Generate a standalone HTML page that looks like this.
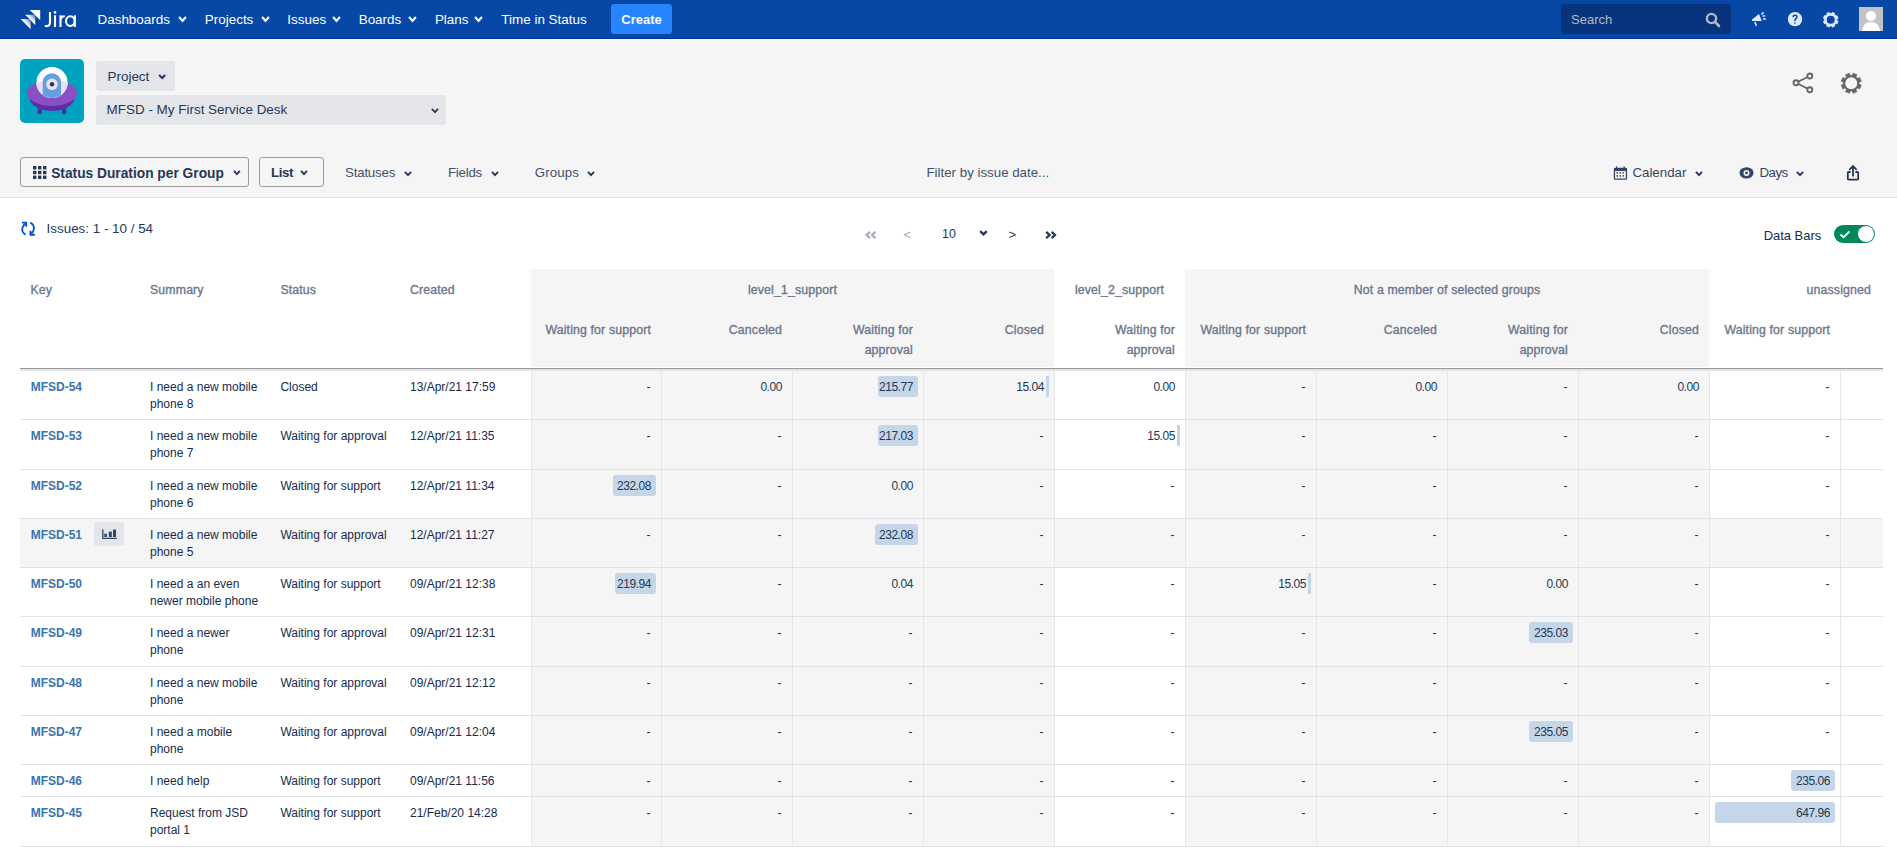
<!DOCTYPE html>
<html><head><meta charset="utf-8"><style>
html,body{margin:0;padding:0;width:1897px;height:859px;overflow:hidden;background:#fff;font-family:"Liberation Sans", sans-serif;}
.t{position:absolute;white-space:nowrap;}
svg{overflow:visible}
</style></head><body>
<div style="position:absolute;left:0px;top:0px;width:1897px;height:38px;background:#0747a6"></div>
<div style="position:absolute;left:0px;top:38px;width:1897px;height:1px;background:#03399c"></div>
<svg style="position:absolute;left:20px;top:9px" width="22" height="21" viewBox="0 0 22 21">
<defs><linearGradient id="jg" x1="1" y1="0" x2="0.3" y2="0.7"><stop offset="0" stop-color="#fff" stop-opacity="0.15"/><stop offset="0.6" stop-color="#fff" stop-opacity="1"/></linearGradient></defs>
<path d="M10 1 H20.2 V11 L19.5 10.6 Q14 5 10 1.2 Z" fill="#fff"/>
<path d="M5.5 5.8 H15.3 V15.8 L14.7 15.4 Q9.5 10 5.4 6.1 Z" fill="url(#jg)"/>
<path d="M1 10 H10.6 V20 L10 19.6 Q5 14.5 0.9 10.3 Z" fill="url(#jg)"/>
</svg>
<svg style="position:absolute;left:40px;top:8px" width="40" height="22" viewBox="0 0 40 22"><g transform="translate(-40 -8)" fill="none" stroke="#fff" stroke-width="2.1"><path d="M50 11.9 V22.3 Q50 26.1 46.9 26.1 Q45.6 26.1 44.9 25.6"/><path d="M55 15.3 V27"/><path d="M60.5 15.3 V27 M60.5 20.3 Q60.7 16.3 64.8 16.3"/><ellipse cx="70.3" cy="21.1" rx="4.3" ry="4.9"/><path d="M74.9 15.3 V27"/></g><circle cx="15" cy="4.4" r="1.35" fill="#fff"/></svg>
<div class="t" style="left:97.50px;top:11.93px;font-size:13.45px;line-height:16.81px;font-weight:400;color:#fff;">Dashboards</div>
<svg style="position:absolute;left:177.4px;top:14.5px" width="11" height="8" viewBox="0 0 11 8"><path d="M2.1 2.1 L5.5 5.9 L8.9 2.1" fill="none" stroke="#fff" stroke-width="2.2" stroke-linecap="butt" stroke-linejoin="miter"/></svg>
<div class="t" style="left:204.80px;top:11.93px;font-size:13.45px;line-height:16.81px;font-weight:400;color:#fff;">Projects</div>
<svg style="position:absolute;left:260px;top:14.5px" width="11" height="8" viewBox="0 0 11 8"><path d="M2.1 2.1 L5.5 5.9 L8.9 2.1" fill="none" stroke="#fff" stroke-width="2.2" stroke-linecap="butt" stroke-linejoin="miter"/></svg>
<div class="t" style="left:287.30px;top:11.93px;font-size:13.45px;line-height:16.81px;font-weight:400;color:#fff;">Issues</div>
<svg style="position:absolute;left:330.9px;top:14.5px" width="11" height="8" viewBox="0 0 11 8"><path d="M2.1 2.1 L5.5 5.9 L8.9 2.1" fill="none" stroke="#fff" stroke-width="2.2" stroke-linecap="butt" stroke-linejoin="miter"/></svg>
<div class="t" style="left:358.70px;top:11.93px;font-size:13.45px;line-height:16.81px;font-weight:400;color:#fff;">Boards</div>
<svg style="position:absolute;left:407.3px;top:14.5px" width="11" height="8" viewBox="0 0 11 8"><path d="M2.1 2.1 L5.5 5.9 L8.9 2.1" fill="none" stroke="#fff" stroke-width="2.2" stroke-linecap="butt" stroke-linejoin="miter"/></svg>
<div class="t" style="left:434.90px;top:11.93px;font-size:13.45px;line-height:16.81px;font-weight:400;color:#fff;">Plans</div>
<svg style="position:absolute;left:473.3px;top:14.5px" width="11" height="8" viewBox="0 0 11 8"><path d="M2.1 2.1 L5.5 5.9 L8.9 2.1" fill="none" stroke="#fff" stroke-width="2.2" stroke-linecap="butt" stroke-linejoin="miter"/></svg>
<div class="t" style="left:501.30px;top:11.93px;font-size:13.45px;line-height:16.81px;font-weight:400;color:#fff;">Time in Status</div>
<div style="position:absolute;left:611px;top:4px;width:61px;height:30px;background:#2684ff;border-radius:3px"></div>
<div class="t" style="left:621.30px;top:12.37px;font-size:13.0px;line-height:16.25px;font-weight:700;color:#fff;">Create</div>
<div style="position:absolute;left:1561px;top:4px;width:170px;height:30px;background:#07347c;border-radius:3px"></div>
<div class="t" style="left:1571.00px;top:12.37px;font-size:13.0px;line-height:16.25px;font-weight:400;color:#b3bac5;">Search</div>
<svg style="position:absolute;left:1705px;top:12px" width="16" height="16" viewBox="0 0 16 16"><circle cx="6.5" cy="6.5" r="4.6" fill="none" stroke="#b3bac5" stroke-width="2.4"/><path d="M10 10 L14 14" stroke="#b3bac5" stroke-width="2.6" stroke-linecap="round"/></svg>
<svg style="position:absolute;left:1750px;top:11px" width="18" height="16" viewBox="0 0 18 16"><path d="M2 9.9 V8.6 L9.1 3 L11.8 9.9 Z" fill="#deebff"/><path d="M4.8 11 L6.4 14.7" stroke="#deebff" stroke-width="1.6"/><path d="M11.4 3.5 L13.6 1.4 M12.6 5.3 L15 4.7 M13.2 7.7 L15.9 8.3" stroke="#deebff" stroke-width="1.5"/></svg>
<svg style="position:absolute;left:1787px;top:12px" width="16" height="15" viewBox="0 0 16 15"><circle cx="8" cy="7.1" r="7.2" fill="#deebff"/><path d="M6 5.1 Q6.1 3.3 8 3.3 Q9.9 3.3 9.9 5 Q9.9 6.2 8.6 6.9 Q7.9 7.3 7.9 8.4 V9.3" fill="none" stroke="#0747a6" stroke-width="1.4" stroke-linecap="butt"/><circle cx="7.9" cy="11.1" r="0.8" fill="#0747a6"/></svg>
<svg style="position:absolute;left:1823px;top:11.5px" width="15.5" height="15.5" viewBox="0 0 15.5 15.5"><path d="M13.90 8.51 L15.19 9.28 L14.09 11.93 L12.64 11.56 L11.56 12.64 L11.93 14.09 L9.28 15.19 L8.51 13.90 L6.99 13.90 L6.22 15.19 L3.57 14.09 L3.94 12.64 L2.86 11.56 L1.41 11.93 L0.31 9.28 L1.60 8.51 L1.60 6.99 L0.31 6.22 L1.41 3.57 L2.86 3.94 L3.94 2.86 L3.57 1.41 L6.22 0.31 L6.99 1.60 L8.51 1.60 L9.28 0.31 L11.93 1.41 L11.56 2.86 L12.64 3.94 L14.09 3.57 L15.19 6.22 L13.90 6.99 Z" fill="#deebff" stroke="#deebff" stroke-width="0.6" stroke-linejoin="round"/><circle cx="7.75" cy="7.75" r="6.2" fill="#deebff"/><circle cx="7.75" cy="7.75" r="4.03" fill="#0747a6"/></svg>
<div style="position:absolute;left:1859px;top:7px;width:24px;height:24px;background:#c4c4c4;overflow:hidden"></div>
<svg style="position:absolute;left:1859px;top:7px" width="24" height="24" viewBox="0 0 24 24"><circle cx="12" cy="9" r="5" fill="#fff"/><path d="M3 24 Q4 15 12 15 Q20 15 21 24 Z" fill="#fff"/></svg>
<div style="position:absolute;left:0px;top:39px;width:1897px;height:158px;background:#f5f5f5"></div>
<div style="position:absolute;left:0px;top:197px;width:1897px;height:1px;background:#dfe1e6"></div>
<svg style="position:absolute;left:20px;top:59px" width="64" height="64" viewBox="0 0 64 64">
<defs><clipPath id="dome"><circle cx="32" cy="23.5" r="15.6"/></clipPath></defs>
<rect x="0" y="0" width="64" height="64" rx="5" fill="#00a3bf"/>
<rect x="17.7" y="44" width="4.2" height="11" rx="0.8" fill="#5029a0"/>
<rect x="42" y="44" width="4.2" height="11" rx="0.8" fill="#5029a0"/>
<ellipse cx="32" cy="38.5" rx="22.5" ry="13.4" fill="#5a2ea6"/>
<ellipse cx="32" cy="34" rx="25.3" ry="12.9" fill="#8a4fc4"/>
<circle cx="32" cy="23.5" r="15.6" fill="#fff"/>
<g clip-path="url(#dome)"><ellipse cx="32" cy="34" rx="25.3" ry="12.9" fill="#e9e0f5"/>
<path d="M22.7 60 V23.3 A9.15 9.15 0 0 1 41 23.3 V60 Z" fill="#63a1de"/></g>
<circle cx="32" cy="25.3" r="5.8" fill="#e9e0f5"/>
<circle cx="32" cy="25.3" r="2.2" fill="#253858"/>
</svg>
<div style="position:absolute;left:96px;top:61px;width:79px;height:30px;background:#e4e5e8;border-radius:3px"></div>
<div class="t" style="left:107.50px;top:69.13px;font-size:13.45px;line-height:16.81px;font-weight:400;color:#253858;">Project</div>
<svg style="position:absolute;left:156.8px;top:72.5px" width="10.3" height="7" viewBox="0 0 10.3 7"><path d="M2.05 2.05 L5.15 4.95 L8.25 2.05" fill="none" stroke="#253858" stroke-width="2.1" stroke-linecap="butt" stroke-linejoin="miter"/></svg>
<div style="position:absolute;left:96px;top:95px;width:350px;height:30px;background:#e4e5e8;border-radius:3px"></div>
<div class="t" style="left:106.60px;top:101.93px;font-size:13.45px;line-height:16.81px;font-weight:400;color:#253858;">MFSD - My First Service Desk</div>
<svg style="position:absolute;left:430px;top:106.5px" width="10" height="7" viewBox="0 0 10 7"><path d="M1.9 1.9 L5.0 5.1 L8.1 1.9" fill="none" stroke="#253858" stroke-width="1.8" stroke-linecap="butt" stroke-linejoin="miter"/></svg>
<svg style="position:absolute;left:1792px;top:72px" width="22" height="22" viewBox="0 0 22 22"><path d="M17.8 4 L4 10.8 L17.8 17.8" fill="none" stroke="#666" stroke-width="1.7"/><circle cx="17.8" cy="4" r="2.5" fill="#f5f5f5" stroke="#666" stroke-width="1.9"/><circle cx="4" cy="10.8" r="2.5" fill="#f5f5f5" stroke="#666" stroke-width="1.9"/><circle cx="17.8" cy="17.8" r="2.5" fill="#f5f5f5" stroke="#666" stroke-width="1.9"/></svg>
<svg style="position:absolute;left:1840.5px;top:72.5px" width="20.5" height="20.5" viewBox="0 0 20.5 20.5"><path d="M17.97 11.28 L20.33 12.11 L18.69 16.06 L16.44 14.98 L14.98 16.44 L16.06 18.69 L12.11 20.33 L11.28 17.97 L9.22 17.97 L8.39 20.33 L4.44 18.69 L5.52 16.44 L4.06 14.98 L1.81 16.06 L0.17 12.11 L2.53 11.28 L2.53 9.22 L0.17 8.39 L1.81 4.44 L4.06 5.52 L5.52 4.06 L4.44 1.81 L8.39 0.17 L9.22 2.53 L11.28 2.53 L12.11 0.17 L16.06 1.81 L14.98 4.06 L16.44 5.52 L18.69 4.44 L20.33 8.39 L17.97 9.22 Z" fill="#666666" stroke="#666666" stroke-width="0.6" stroke-linejoin="round"/><circle cx="10.25" cy="10.25" r="7.79" fill="#666666"/><circle cx="10.25" cy="10.25" r="5.944999999999999" fill="#f5f5f5"/></svg>
<div style="position:absolute;left:20px;top:157px;width:227px;height:28px;border:1px solid #9a9a9a;border-radius:3px"></div>
<svg style="position:absolute;left:32.5px;top:166px" width="14" height="13" viewBox="0 0 14 13"><rect x="0" y="0.0" width="3.4" height="3.4" fill="#253858"/><rect x="0" y="4.8" width="3.4" height="3.4" fill="#253858"/><rect x="0" y="9.6" width="3.4" height="3.4" fill="#253858"/><rect x="5" y="0.0" width="3.4" height="3.4" fill="#253858"/><rect x="5" y="4.8" width="3.4" height="3.4" fill="#253858"/><rect x="5" y="9.6" width="3.4" height="3.4" fill="#253858"/><rect x="10" y="0.0" width="3.4" height="3.4" fill="#253858"/><rect x="10" y="4.8" width="3.4" height="3.4" fill="#253858"/><rect x="10" y="9.6" width="3.4" height="3.4" fill="#253858"/></svg>
<div class="t" style="left:51.20px;top:164.64px;font-size:13.75px;line-height:17.19px;font-weight:700;color:#253858;">Status Duration per Group</div>
<svg style="position:absolute;left:231.6px;top:169px" width="9.8" height="7" viewBox="0 0 9.8 7"><path d="M1.95 1.95 L4.9 5.05 L7.8500000000000005 1.95" fill="none" stroke="#253858" stroke-width="1.9" stroke-linecap="butt" stroke-linejoin="miter"/></svg>
<div style="position:absolute;left:259px;top:157px;width:63px;height:28px;border:1px solid #9a9a9a;border-radius:3px"></div>
<div class="t" style="left:271.00px;top:165.08px;font-size:13.3px;line-height:16.62px;font-weight:700;color:#253858;letter-spacing:-0.4px;">List</div>
<svg style="position:absolute;left:299px;top:169px" width="10" height="7" viewBox="0 0 10 7"><path d="M1.95 1.95 L5.0 5.05 L8.05 1.95" fill="none" stroke="#253858" stroke-width="1.9" stroke-linecap="butt" stroke-linejoin="miter"/></svg>
<div class="t" style="left:345.10px;top:165.08px;font-size:13.3px;line-height:16.62px;font-weight:400;color:#42526e;letter-spacing:-0.22px;">Statuses</div>
<svg style="position:absolute;left:402.8px;top:169.5px" width="10" height="7" viewBox="0 0 10 7"><path d="M1.95 1.95 L5.0 5.05 L8.05 1.95" fill="none" stroke="#253858" stroke-width="1.9" stroke-linecap="butt" stroke-linejoin="miter"/></svg>
<div class="t" style="left:448.00px;top:165.08px;font-size:13.3px;line-height:16.62px;font-weight:400;color:#42526e;letter-spacing:-0.25px;">Fields</div>
<svg style="position:absolute;left:489.8px;top:169.5px" width="10" height="7" viewBox="0 0 10 7"><path d="M1.95 1.95 L5.0 5.05 L8.05 1.95" fill="none" stroke="#253858" stroke-width="1.9" stroke-linecap="butt" stroke-linejoin="miter"/></svg>
<div class="t" style="left:534.70px;top:165.08px;font-size:13.3px;line-height:16.62px;font-weight:400;color:#42526e;letter-spacing:0.1px;">Groups</div>
<svg style="position:absolute;left:586px;top:169.5px" width="10" height="7" viewBox="0 0 10 7"><path d="M1.95 1.95 L5.0 5.05 L8.05 1.95" fill="none" stroke="#253858" stroke-width="1.9" stroke-linecap="butt" stroke-linejoin="miter"/></svg>
<div class="t" style="left:926.50px;top:165.08px;font-size:13.3px;line-height:16.62px;font-weight:400;color:#42526e;">Filter by issue date...</div>
<svg style="position:absolute;left:1613px;top:166px" width="15" height="15" viewBox="0 0 15 15"><rect x="1.45" y="2.4" width="12" height="10.8" rx="0.8" fill="none" stroke="#344563" stroke-width="1.3"/><rect x="1" y="2" width="13" height="3" fill="#344563"/><rect x="3.1" y="0.2" width="1.1" height="2" fill="#344563"/><rect x="10.6" y="0.2" width="1.1" height="2" fill="#344563"/><rect x="3.5" y="6.1" width="1.5" height="1.5" fill="#344563"/><rect x="3.5" y="9.149999999999999" width="1.5" height="1.5" fill="#344563"/><rect x="6.5" y="6.1" width="1.5" height="1.5" fill="#344563"/><rect x="6.5" y="9.149999999999999" width="1.5" height="1.5" fill="#344563"/><rect x="9.5" y="6.1" width="1.5" height="1.5" fill="#344563"/><rect x="9.5" y="9.149999999999999" width="1.5" height="1.5" fill="#344563"/></svg>
<div class="t" style="left:1632.40px;top:165.08px;font-size:13.3px;line-height:16.62px;font-weight:400;color:#344563;">Calendar</div>
<svg style="position:absolute;left:1693.6px;top:169.5px" width="10" height="7" viewBox="0 0 10 7"><path d="M1.95 1.95 L5.0 5.05 L8.05 1.95" fill="none" stroke="#253858" stroke-width="1.9" stroke-linecap="butt" stroke-linejoin="miter"/></svg>
<svg style="position:absolute;left:1739px;top:167px" width="15" height="12" viewBox="0 0 15 12"><ellipse cx="7.5" cy="5.9" rx="7" ry="5.7" fill="#344563"/><circle cx="7.5" cy="5.9" r="3" fill="#f5f5f5"/><circle cx="7.5" cy="5.9" r="1.4" fill="#344563"/></svg>
<div class="t" style="left:1759.40px;top:165.08px;font-size:13.3px;line-height:16.62px;font-weight:400;color:#344563;letter-spacing:-0.5px;">Days</div>
<svg style="position:absolute;left:1795.4px;top:169.5px" width="10" height="7" viewBox="0 0 10 7"><path d="M1.95 1.95 L5.0 5.05 L8.05 1.95" fill="none" stroke="#253858" stroke-width="1.9" stroke-linecap="butt" stroke-linejoin="miter"/></svg>
<svg style="position:absolute;left:1846px;top:164px" width="14" height="17" viewBox="0 0 14 17"><path d="M7 2.2 V12.6 M3.3 5.8 L7 2.1 L10.7 5.8" fill="none" stroke="#253858" stroke-width="1.8"/><path d="M4.6 8 H2.7 Q1.8 8 1.8 8.9 V14.7 Q1.8 15.6 2.7 15.6 H11.3 Q12.2 15.6 12.2 14.7 V8.9 Q12.2 8 11.3 8 H9.4" fill="none" stroke="#253858" stroke-width="1.8"/></svg>
<div style="position:absolute;left:0px;top:198px;width:1897px;height:661px;background:#fff"></div>
<svg style="position:absolute;left:20px;top:221px" width="16" height="16" viewBox="0 0 16 16"><path d="M5 2.6 Q1.2 6.5 2.6 10.5 Q3.5 12.6 5.6 13.6" fill="none" stroke="#0052cc" stroke-width="1.8"/><path d="M2 1.6 H6.2 V5.8" fill="none" stroke="#0052cc" stroke-width="1.9"/><path d="M10.3 1.6 Q12.6 2.6 13.6 5 Q15 9.4 11 13" fill="none" stroke="#0052cc" stroke-width="1.8"/><path d="M14.8 13.8 H10.5 V9.8" fill="none" stroke="#0052cc" stroke-width="1.9"/></svg>
<div class="t" style="left:46.60px;top:220.98px;font-size:13.4px;line-height:16.75px;font-weight:400;color:#253858;">Issues: 1 - 10 / 54</div>
<svg style="position:absolute;left:865px;top:231px" width="12" height="8" viewBox="0 0 12 8"><path d="M5 0.8 L1.6 4 L5 7.2 M10.4 0.8 L7 4 L10.4 7.2" fill="none" stroke="#a5adba" stroke-width="2.3"/></svg>
<div class="t" style="left:903.50px;top:227.17px;font-size:13px;line-height:16.25px;font-weight:400;color:#a5adba;">&lt;</div>
<div class="t" style="left:942.00px;top:226.75px;font-size:12.4px;line-height:15.5px;font-weight:400;color:#253858;">10</div>
<svg style="position:absolute;left:977.5px;top:229px" width="11" height="7.5" viewBox="0 0 11 7.5"><path d="M2.2 2.2 L5.5 5.3 L8.8 2.2" fill="none" stroke="#253858" stroke-width="2.4" stroke-linecap="butt" stroke-linejoin="miter"/></svg>
<div class="t" style="left:1008.50px;top:227.17px;font-size:13px;line-height:16.25px;font-weight:400;color:#253858;">&gt;</div>
<svg style="position:absolute;left:1045px;top:231px" width="12" height="8" viewBox="0 0 12 8"><path d="M1.2 0.8 L4.6 4 L1.2 7.2 M6.6 0.8 L10 4 L6.6 7.2" fill="none" stroke="#253858" stroke-width="2.3"/></svg>
<div class="t" style="left:1763.70px;top:228.12px;font-size:12.95px;line-height:16.19px;font-weight:400;color:#172b4d;">Data Bars</div>
<div style="position:absolute;left:1834px;top:225px;width:41px;height:18px;background:#00875a;border-radius:9px"></div>
<div style="position:absolute;left:1857.5px;top:225.8px;width:16.5px;height:16.5px;background:#fff;border-radius:50%"></div>
<svg style="position:absolute;left:1839px;top:230px" width="12" height="9" viewBox="0 0 12 9"><path d="M1.5 4.5 L4.5 7.2 L10.5 1.5" fill="none" stroke="#fff" stroke-width="1.8"/></svg>
<div style="position:absolute;left:531px;top:269px;width:523px;height:98px;background:#f5f5f5"></div>
<div style="position:absolute;left:1185px;top:269px;width:524px;height:98px;background:#f5f5f5"></div>
<div style="position:absolute;left:531px;top:371px;width:523px;height:475px;background:#f5f5f5"></div>
<div style="position:absolute;left:1185px;top:371px;width:524px;height:475px;background:#f5f5f5"></div>
<div style="position:absolute;left:20px;top:519px;width:1863px;height:48px;background:#f5f5f5"></div>
<div style="position:absolute;left:20px;top:368px;width:1863px;height:1px;background:#999999"></div>
<div style="position:absolute;left:20px;top:369px;width:1863px;height:2px;background:#e1e3e8"></div>
<div style="position:absolute;left:531px;top:371px;width:1px;height:475px;background:#e6e6e6"></div>
<div style="position:absolute;left:661px;top:371px;width:1px;height:475px;background:#e6e6e6"></div>
<div style="position:absolute;left:792px;top:371px;width:1px;height:475px;background:#e6e6e6"></div>
<div style="position:absolute;left:923px;top:371px;width:1px;height:475px;background:#e6e6e6"></div>
<div style="position:absolute;left:1054px;top:371px;width:1px;height:475px;background:#e6e6e6"></div>
<div style="position:absolute;left:1185px;top:371px;width:1px;height:475px;background:#e6e6e6"></div>
<div style="position:absolute;left:1316px;top:371px;width:1px;height:475px;background:#e6e6e6"></div>
<div style="position:absolute;left:1447px;top:371px;width:1px;height:475px;background:#e6e6e6"></div>
<div style="position:absolute;left:1578px;top:371px;width:1px;height:475px;background:#e6e6e6"></div>
<div style="position:absolute;left:1709px;top:371px;width:1px;height:475px;background:#e6e6e6"></div>
<div style="position:absolute;left:1840px;top:371px;width:1px;height:475px;background:#e6e6e6"></div>
<div style="position:absolute;left:20px;top:419px;width:1863px;height:1px;background:#e1e3e8"></div>
<div style="position:absolute;left:20px;top:469px;width:1863px;height:1px;background:#e1e3e8"></div>
<div style="position:absolute;left:20px;top:518px;width:1863px;height:1px;background:#e1e3e8"></div>
<div style="position:absolute;left:20px;top:567px;width:1863px;height:1px;background:#e1e3e8"></div>
<div style="position:absolute;left:20px;top:616px;width:1863px;height:1px;background:#e1e3e8"></div>
<div style="position:absolute;left:20px;top:666px;width:1863px;height:1px;background:#e1e3e8"></div>
<div style="position:absolute;left:20px;top:715px;width:1863px;height:1px;background:#e1e3e8"></div>
<div style="position:absolute;left:20px;top:764px;width:1863px;height:1px;background:#e1e3e8"></div>
<div style="position:absolute;left:20px;top:796px;width:1863px;height:1px;background:#e1e3e8"></div>
<div style="position:absolute;left:20px;top:846px;width:1863px;height:1px;background:#e1e3e8"></div>
<div class="t" style="left:30.40px;top:282.55px;font-size:12.3px;line-height:15.38px;font-weight:400;color:#6b778c;letter-spacing:0.15px;-webkit-text-stroke:0.35px #6b778c;">Key</div>
<div class="t" style="left:150.00px;top:282.55px;font-size:12.3px;line-height:15.38px;font-weight:400;color:#6b778c;letter-spacing:0.15px;-webkit-text-stroke:0.35px #6b778c;">Summary</div>
<div class="t" style="left:280.40px;top:282.55px;font-size:12.3px;line-height:15.38px;font-weight:400;color:#6b778c;letter-spacing:0.15px;-webkit-text-stroke:0.35px #6b778c;">Status</div>
<div class="t" style="left:410.00px;top:282.55px;font-size:12.3px;line-height:15.38px;font-weight:400;color:#6b778c;letter-spacing:0.15px;-webkit-text-stroke:0.35px #6b778c;">Created</div>
<div class="t" style="left:592.50px;width:400px;text-align:center;top:282.55px;font-size:12.3px;line-height:15.375px;font-weight:400;color:#6b778c;letter-spacing:0.15px;-webkit-text-stroke:0.35px #6b778c;">level_1_support</div>
<div class="t" style="left:919.50px;width:400px;text-align:center;top:282.55px;font-size:12.3px;line-height:15.375px;font-weight:400;color:#6b778c;letter-spacing:0.15px;-webkit-text-stroke:0.35px #6b778c;">level_2_support</div>
<div class="t" style="left:1247.00px;width:400px;text-align:center;top:282.55px;font-size:12.3px;line-height:15.375px;font-weight:400;color:#6b778c;letter-spacing:0.15px;-webkit-text-stroke:0.35px #6b778c;">Not a member of selected groups</div>
<div class="t" style="right:26.00px;top:282.55px;font-size:12.3px;line-height:15.38px;font-weight:400;color:#6b778c;letter-spacing:0.15px;-webkit-text-stroke:0.35px #6b778c;">unassigned</div>
<div class="t" style="right:1246.00px;top:320.94px;font-size:12.3px;line-height:19.6px;font-weight:400;color:#6b778c;text-align:right;letter-spacing:0.15px;-webkit-text-stroke:0.35px #6b778c;">Waiting for support</div>
<div class="t" style="right:1115.00px;top:320.94px;font-size:12.3px;line-height:19.6px;font-weight:400;color:#6b778c;text-align:right;letter-spacing:0.15px;-webkit-text-stroke:0.35px #6b778c;">Canceled</div>
<div class="t" style="right:984.00px;top:320.94px;font-size:12.3px;line-height:19.6px;font-weight:400;color:#6b778c;text-align:right;letter-spacing:0.15px;-webkit-text-stroke:0.35px #6b778c;">Waiting for<br>approval</div>
<div class="t" style="right:853.00px;top:320.94px;font-size:12.3px;line-height:19.6px;font-weight:400;color:#6b778c;text-align:right;letter-spacing:0.15px;-webkit-text-stroke:0.35px #6b778c;">Closed</div>
<div class="t" style="right:722.00px;top:320.94px;font-size:12.3px;line-height:19.6px;font-weight:400;color:#6b778c;text-align:right;letter-spacing:0.15px;-webkit-text-stroke:0.35px #6b778c;">Waiting for<br>approval</div>
<div class="t" style="right:591.00px;top:320.94px;font-size:12.3px;line-height:19.6px;font-weight:400;color:#6b778c;text-align:right;letter-spacing:0.15px;-webkit-text-stroke:0.35px #6b778c;">Waiting for support</div>
<div class="t" style="right:460.00px;top:320.94px;font-size:12.3px;line-height:19.6px;font-weight:400;color:#6b778c;text-align:right;letter-spacing:0.15px;-webkit-text-stroke:0.35px #6b778c;">Canceled</div>
<div class="t" style="right:329.00px;top:320.94px;font-size:12.3px;line-height:19.6px;font-weight:400;color:#6b778c;text-align:right;letter-spacing:0.15px;-webkit-text-stroke:0.35px #6b778c;">Waiting for<br>approval</div>
<div class="t" style="right:198.00px;top:320.94px;font-size:12.3px;line-height:19.6px;font-weight:400;color:#6b778c;text-align:right;letter-spacing:0.15px;-webkit-text-stroke:0.35px #6b778c;">Closed</div>
<div class="t" style="right:67.00px;top:320.94px;font-size:12.3px;line-height:19.6px;font-weight:400;color:#6b778c;text-align:right;letter-spacing:0.15px;-webkit-text-stroke:0.35px #6b778c;">Waiting for support</div>
<div class="t" style="left:30.70px;top:380.34px;font-size:12px;line-height:15.0px;font-weight:700;color:#3b73af;">MFSD-54</div>
<div class="t" style="left:150px;top:379.27px;font-size:12px;line-height:17.14px;color:#172b4d">I need a new mobile<br>phone 8</div>
<div class="t" style="left:280.40px;top:380.34px;font-size:12px;line-height:15.0px;font-weight:400;color:#172b4d;">Closed</div>
<div class="t" style="left:410.00px;top:380.34px;font-size:12px;line-height:15.0px;font-weight:400;color:#172b4d;">13/Apr/21 17:59</div>
<div class="t" style="right:1246.50px;top:380.34px;font-size:12px;line-height:15.0px;font-weight:400;color:#172b4d;">-</div>
<div class="t" style="right:1115.05px;top:380.34px;font-size:12px;line-height:15.0px;font-weight:400;color:#253858;letter-spacing:-0.45px;">0.00</div>
<div style="position:absolute;left:878.04px;top:376px;width:39.96px;height:21px;background:#c4d6e7;border-radius:3px"></div>
<div class="t" style="right:984.05px;top:380.34px;font-size:12px;line-height:15.0px;font-weight:400;color:#253858;letter-spacing:-0.45px;">215.77</div>
<div style="position:absolute;left:1046.21px;top:376px;width:2.79px;height:21px;background:#c4d6e7;border-radius:0"></div>
<div class="t" style="right:853.05px;top:380.34px;font-size:12px;line-height:15.0px;font-weight:400;color:#253858;letter-spacing:-0.45px;">15.04</div>
<div class="t" style="right:722.05px;top:380.34px;font-size:12px;line-height:15.0px;font-weight:400;color:#253858;letter-spacing:-0.45px;">0.00</div>
<div class="t" style="right:591.50px;top:380.34px;font-size:12px;line-height:15.0px;font-weight:400;color:#172b4d;">-</div>
<div class="t" style="right:460.05px;top:380.34px;font-size:12px;line-height:15.0px;font-weight:400;color:#253858;letter-spacing:-0.45px;">0.00</div>
<div class="t" style="right:329.50px;top:380.34px;font-size:12px;line-height:15.0px;font-weight:400;color:#172b4d;">-</div>
<div class="t" style="right:198.05px;top:380.34px;font-size:12px;line-height:15.0px;font-weight:400;color:#253858;letter-spacing:-0.45px;">0.00</div>
<div class="t" style="right:67.50px;top:380.34px;font-size:12px;line-height:15.0px;font-weight:400;color:#172b4d;">-</div>
<div class="t" style="left:30.70px;top:429.34px;font-size:12px;line-height:15.0px;font-weight:700;color:#3b73af;">MFSD-53</div>
<div class="t" style="left:150px;top:428.27px;font-size:12px;line-height:17.14px;color:#172b4d">I need a new mobile<br>phone 7</div>
<div class="t" style="left:280.40px;top:429.34px;font-size:12px;line-height:15.0px;font-weight:400;color:#172b4d;">Waiting for approval</div>
<div class="t" style="left:410.00px;top:429.34px;font-size:12px;line-height:15.0px;font-weight:400;color:#172b4d;">12/Apr/21 11:35</div>
<div class="t" style="right:1246.50px;top:429.34px;font-size:12px;line-height:15.0px;font-weight:400;color:#172b4d;">-</div>
<div class="t" style="right:1115.50px;top:429.34px;font-size:12px;line-height:15.0px;font-weight:400;color:#172b4d;">-</div>
<div style="position:absolute;left:877.81px;top:425px;width:40.19px;height:21px;background:#c4d6e7;border-radius:3px"></div>
<div class="t" style="right:984.05px;top:429.34px;font-size:12px;line-height:15.0px;font-weight:400;color:#253858;letter-spacing:-0.45px;">217.03</div>
<div class="t" style="right:853.50px;top:429.34px;font-size:12px;line-height:15.0px;font-weight:400;color:#172b4d;">-</div>
<div style="position:absolute;left:1177.21px;top:425px;width:2.79px;height:21px;background:#c4d6e7;border-radius:0"></div>
<div class="t" style="right:722.05px;top:429.34px;font-size:12px;line-height:15.0px;font-weight:400;color:#253858;letter-spacing:-0.45px;">15.05</div>
<div class="t" style="right:591.50px;top:429.34px;font-size:12px;line-height:15.0px;font-weight:400;color:#172b4d;">-</div>
<div class="t" style="right:460.50px;top:429.34px;font-size:12px;line-height:15.0px;font-weight:400;color:#172b4d;">-</div>
<div class="t" style="right:329.50px;top:429.34px;font-size:12px;line-height:15.0px;font-weight:400;color:#172b4d;">-</div>
<div class="t" style="right:198.50px;top:429.34px;font-size:12px;line-height:15.0px;font-weight:400;color:#172b4d;">-</div>
<div class="t" style="right:67.50px;top:429.34px;font-size:12px;line-height:15.0px;font-weight:400;color:#172b4d;">-</div>
<div class="t" style="left:30.70px;top:479.34px;font-size:12px;line-height:15.0px;font-weight:700;color:#3b73af;">MFSD-52</div>
<div class="t" style="left:150px;top:478.27px;font-size:12px;line-height:17.14px;color:#172b4d">I need a new mobile<br>phone 6</div>
<div class="t" style="left:280.40px;top:479.34px;font-size:12px;line-height:15.0px;font-weight:400;color:#172b4d;">Waiting for support</div>
<div class="t" style="left:410.00px;top:479.34px;font-size:12px;line-height:15.0px;font-weight:400;color:#172b4d;">12/Apr/21 11:34</div>
<div style="position:absolute;left:613.02px;top:475px;width:42.98px;height:21px;background:#c4d6e7;border-radius:3px"></div>
<div class="t" style="right:1246.05px;top:479.34px;font-size:12px;line-height:15.0px;font-weight:400;color:#253858;letter-spacing:-0.45px;">232.08</div>
<div class="t" style="right:1115.50px;top:479.34px;font-size:12px;line-height:15.0px;font-weight:400;color:#172b4d;">-</div>
<div class="t" style="right:984.05px;top:479.34px;font-size:12px;line-height:15.0px;font-weight:400;color:#253858;letter-spacing:-0.45px;">0.00</div>
<div class="t" style="right:853.50px;top:479.34px;font-size:12px;line-height:15.0px;font-weight:400;color:#172b4d;">-</div>
<div class="t" style="right:722.50px;top:479.34px;font-size:12px;line-height:15.0px;font-weight:400;color:#172b4d;">-</div>
<div class="t" style="right:591.50px;top:479.34px;font-size:12px;line-height:15.0px;font-weight:400;color:#172b4d;">-</div>
<div class="t" style="right:460.50px;top:479.34px;font-size:12px;line-height:15.0px;font-weight:400;color:#172b4d;">-</div>
<div class="t" style="right:329.50px;top:479.34px;font-size:12px;line-height:15.0px;font-weight:400;color:#172b4d;">-</div>
<div class="t" style="right:198.50px;top:479.34px;font-size:12px;line-height:15.0px;font-weight:400;color:#172b4d;">-</div>
<div class="t" style="right:67.50px;top:479.34px;font-size:12px;line-height:15.0px;font-weight:400;color:#172b4d;">-</div>
<div class="t" style="left:30.70px;top:528.34px;font-size:12px;line-height:15.0px;font-weight:700;color:#3b73af;">MFSD-51</div>
<div class="t" style="left:150px;top:527.27px;font-size:12px;line-height:17.14px;color:#172b4d">I need a new mobile<br>phone 5</div>
<div class="t" style="left:280.40px;top:528.34px;font-size:12px;line-height:15.0px;font-weight:400;color:#172b4d;">Waiting for approval</div>
<div class="t" style="left:410.00px;top:528.34px;font-size:12px;line-height:15.0px;font-weight:400;color:#172b4d;">12/Apr/21 11:27</div>
<div style="position:absolute;left:94px;top:522px;width:30px;height:24px;background:#e4e5e8;border-radius:3px"></div>
<svg style="position:absolute;left:102px;top:529px" width="15" height="11" viewBox="0 0 15 11"><path d="M0.8 0.3 V9.4 H14.8" fill="none" stroke="#344563" stroke-width="1.3"/><rect x="2.3" y="4.6" width="2.6" height="3.4" fill="#344563"/><rect x="6.8" y="2.6" width="3" height="5.4" fill="#344563"/><rect x="11" y="0.6" width="3" height="7.4" fill="#344563"/></svg>
<div class="t" style="right:1246.50px;top:528.34px;font-size:12px;line-height:15.0px;font-weight:400;color:#172b4d;">-</div>
<div class="t" style="right:1115.50px;top:528.34px;font-size:12px;line-height:15.0px;font-weight:400;color:#172b4d;">-</div>
<div style="position:absolute;left:875.02px;top:524px;width:42.98px;height:21px;background:#c4d6e7;border-radius:3px"></div>
<div class="t" style="right:984.05px;top:528.34px;font-size:12px;line-height:15.0px;font-weight:400;color:#253858;letter-spacing:-0.45px;">232.08</div>
<div class="t" style="right:853.50px;top:528.34px;font-size:12px;line-height:15.0px;font-weight:400;color:#172b4d;">-</div>
<div class="t" style="right:722.50px;top:528.34px;font-size:12px;line-height:15.0px;font-weight:400;color:#172b4d;">-</div>
<div class="t" style="right:591.50px;top:528.34px;font-size:12px;line-height:15.0px;font-weight:400;color:#172b4d;">-</div>
<div class="t" style="right:460.50px;top:528.34px;font-size:12px;line-height:15.0px;font-weight:400;color:#172b4d;">-</div>
<div class="t" style="right:329.50px;top:528.34px;font-size:12px;line-height:15.0px;font-weight:400;color:#172b4d;">-</div>
<div class="t" style="right:198.50px;top:528.34px;font-size:12px;line-height:15.0px;font-weight:400;color:#172b4d;">-</div>
<div class="t" style="right:67.50px;top:528.34px;font-size:12px;line-height:15.0px;font-weight:400;color:#172b4d;">-</div>
<div class="t" style="left:30.70px;top:577.34px;font-size:12px;line-height:15.0px;font-weight:700;color:#3b73af;">MFSD-50</div>
<div class="t" style="left:150px;top:576.27px;font-size:12px;line-height:17.14px;color:#172b4d">I need a an even<br>newer mobile phone</div>
<div class="t" style="left:280.40px;top:577.34px;font-size:12px;line-height:15.0px;font-weight:400;color:#172b4d;">Waiting for support</div>
<div class="t" style="left:410.00px;top:577.34px;font-size:12px;line-height:15.0px;font-weight:400;color:#172b4d;">09/Apr/21 12:38</div>
<div style="position:absolute;left:615.27px;top:573px;width:40.73px;height:21px;background:#c4d6e7;border-radius:3px"></div>
<div class="t" style="right:1246.05px;top:577.34px;font-size:12px;line-height:15.0px;font-weight:400;color:#253858;letter-spacing:-0.45px;">219.94</div>
<div class="t" style="right:1115.50px;top:577.34px;font-size:12px;line-height:15.0px;font-weight:400;color:#172b4d;">-</div>
<div class="t" style="right:984.05px;top:577.34px;font-size:12px;line-height:15.0px;font-weight:400;color:#253858;letter-spacing:-0.45px;">0.04</div>
<div class="t" style="right:853.50px;top:577.34px;font-size:12px;line-height:15.0px;font-weight:400;color:#172b4d;">-</div>
<div class="t" style="right:722.50px;top:577.34px;font-size:12px;line-height:15.0px;font-weight:400;color:#172b4d;">-</div>
<div style="position:absolute;left:1308.21px;top:573px;width:2.79px;height:21px;background:#c4d6e7;border-radius:0"></div>
<div class="t" style="right:591.05px;top:577.34px;font-size:12px;line-height:15.0px;font-weight:400;color:#253858;letter-spacing:-0.45px;">15.05</div>
<div class="t" style="right:460.50px;top:577.34px;font-size:12px;line-height:15.0px;font-weight:400;color:#172b4d;">-</div>
<div class="t" style="right:329.05px;top:577.34px;font-size:12px;line-height:15.0px;font-weight:400;color:#253858;letter-spacing:-0.45px;">0.00</div>
<div class="t" style="right:198.50px;top:577.34px;font-size:12px;line-height:15.0px;font-weight:400;color:#172b4d;">-</div>
<div class="t" style="right:67.50px;top:577.34px;font-size:12px;line-height:15.0px;font-weight:400;color:#172b4d;">-</div>
<div class="t" style="left:30.70px;top:626.34px;font-size:12px;line-height:15.0px;font-weight:700;color:#3b73af;">MFSD-49</div>
<div class="t" style="left:150px;top:625.27px;font-size:12px;line-height:17.14px;color:#172b4d">I need a newer<br>phone</div>
<div class="t" style="left:280.40px;top:626.34px;font-size:12px;line-height:15.0px;font-weight:400;color:#172b4d;">Waiting for approval</div>
<div class="t" style="left:410.00px;top:626.34px;font-size:12px;line-height:15.0px;font-weight:400;color:#172b4d;">09/Apr/21 12:31</div>
<div class="t" style="right:1246.50px;top:626.34px;font-size:12px;line-height:15.0px;font-weight:400;color:#172b4d;">-</div>
<div class="t" style="right:1115.50px;top:626.34px;font-size:12px;line-height:15.0px;font-weight:400;color:#172b4d;">-</div>
<div class="t" style="right:984.50px;top:626.34px;font-size:12px;line-height:15.0px;font-weight:400;color:#172b4d;">-</div>
<div class="t" style="right:853.50px;top:626.34px;font-size:12px;line-height:15.0px;font-weight:400;color:#172b4d;">-</div>
<div class="t" style="right:722.50px;top:626.34px;font-size:12px;line-height:15.0px;font-weight:400;color:#172b4d;">-</div>
<div class="t" style="right:591.50px;top:626.34px;font-size:12px;line-height:15.0px;font-weight:400;color:#172b4d;">-</div>
<div class="t" style="right:460.50px;top:626.34px;font-size:12px;line-height:15.0px;font-weight:400;color:#172b4d;">-</div>
<div style="position:absolute;left:1529.47px;top:622px;width:43.53px;height:21px;background:#c4d6e7;border-radius:3px"></div>
<div class="t" style="right:329.05px;top:626.34px;font-size:12px;line-height:15.0px;font-weight:400;color:#253858;letter-spacing:-0.45px;">235.03</div>
<div class="t" style="right:198.50px;top:626.34px;font-size:12px;line-height:15.0px;font-weight:400;color:#172b4d;">-</div>
<div class="t" style="right:67.50px;top:626.34px;font-size:12px;line-height:15.0px;font-weight:400;color:#172b4d;">-</div>
<div class="t" style="left:30.70px;top:676.34px;font-size:12px;line-height:15.0px;font-weight:700;color:#3b73af;">MFSD-48</div>
<div class="t" style="left:150px;top:675.27px;font-size:12px;line-height:17.14px;color:#172b4d">I need a new mobile<br>phone</div>
<div class="t" style="left:280.40px;top:676.34px;font-size:12px;line-height:15.0px;font-weight:400;color:#172b4d;">Waiting for approval</div>
<div class="t" style="left:410.00px;top:676.34px;font-size:12px;line-height:15.0px;font-weight:400;color:#172b4d;">09/Apr/21 12:12</div>
<div class="t" style="right:1246.50px;top:676.34px;font-size:12px;line-height:15.0px;font-weight:400;color:#172b4d;">-</div>
<div class="t" style="right:1115.50px;top:676.34px;font-size:12px;line-height:15.0px;font-weight:400;color:#172b4d;">-</div>
<div class="t" style="right:984.50px;top:676.34px;font-size:12px;line-height:15.0px;font-weight:400;color:#172b4d;">-</div>
<div class="t" style="right:853.50px;top:676.34px;font-size:12px;line-height:15.0px;font-weight:400;color:#172b4d;">-</div>
<div class="t" style="right:722.50px;top:676.34px;font-size:12px;line-height:15.0px;font-weight:400;color:#172b4d;">-</div>
<div class="t" style="right:591.50px;top:676.34px;font-size:12px;line-height:15.0px;font-weight:400;color:#172b4d;">-</div>
<div class="t" style="right:460.50px;top:676.34px;font-size:12px;line-height:15.0px;font-weight:400;color:#172b4d;">-</div>
<div class="t" style="right:329.50px;top:676.34px;font-size:12px;line-height:15.0px;font-weight:400;color:#172b4d;">-</div>
<div class="t" style="right:198.50px;top:676.34px;font-size:12px;line-height:15.0px;font-weight:400;color:#172b4d;">-</div>
<div class="t" style="right:67.50px;top:676.34px;font-size:12px;line-height:15.0px;font-weight:400;color:#172b4d;">-</div>
<div class="t" style="left:30.70px;top:725.34px;font-size:12px;line-height:15.0px;font-weight:700;color:#3b73af;">MFSD-47</div>
<div class="t" style="left:150px;top:724.27px;font-size:12px;line-height:17.14px;color:#172b4d">I need a mobile<br>phone</div>
<div class="t" style="left:280.40px;top:725.34px;font-size:12px;line-height:15.0px;font-weight:400;color:#172b4d;">Waiting for approval</div>
<div class="t" style="left:410.00px;top:725.34px;font-size:12px;line-height:15.0px;font-weight:400;color:#172b4d;">09/Apr/21 12:04</div>
<div class="t" style="right:1246.50px;top:725.34px;font-size:12px;line-height:15.0px;font-weight:400;color:#172b4d;">-</div>
<div class="t" style="right:1115.50px;top:725.34px;font-size:12px;line-height:15.0px;font-weight:400;color:#172b4d;">-</div>
<div class="t" style="right:984.50px;top:725.34px;font-size:12px;line-height:15.0px;font-weight:400;color:#172b4d;">-</div>
<div class="t" style="right:853.50px;top:725.34px;font-size:12px;line-height:15.0px;font-weight:400;color:#172b4d;">-</div>
<div class="t" style="right:722.50px;top:725.34px;font-size:12px;line-height:15.0px;font-weight:400;color:#172b4d;">-</div>
<div class="t" style="right:591.50px;top:725.34px;font-size:12px;line-height:15.0px;font-weight:400;color:#172b4d;">-</div>
<div class="t" style="right:460.50px;top:725.34px;font-size:12px;line-height:15.0px;font-weight:400;color:#172b4d;">-</div>
<div style="position:absolute;left:1529.47px;top:721px;width:43.53px;height:21px;background:#c4d6e7;border-radius:3px"></div>
<div class="t" style="right:329.05px;top:725.34px;font-size:12px;line-height:15.0px;font-weight:400;color:#253858;letter-spacing:-0.45px;">235.05</div>
<div class="t" style="right:198.50px;top:725.34px;font-size:12px;line-height:15.0px;font-weight:400;color:#172b4d;">-</div>
<div class="t" style="right:67.50px;top:725.34px;font-size:12px;line-height:15.0px;font-weight:400;color:#172b4d;">-</div>
<div class="t" style="left:30.70px;top:774.34px;font-size:12px;line-height:15.0px;font-weight:700;color:#3b73af;">MFSD-46</div>
<div class="t" style="left:150px;top:773.27px;font-size:12px;line-height:17.14px;color:#172b4d">I need help</div>
<div class="t" style="left:280.40px;top:774.34px;font-size:12px;line-height:15.0px;font-weight:400;color:#172b4d;">Waiting for support</div>
<div class="t" style="left:410.00px;top:774.34px;font-size:12px;line-height:15.0px;font-weight:400;color:#172b4d;">09/Apr/21 11:56</div>
<div class="t" style="right:1246.50px;top:774.34px;font-size:12px;line-height:15.0px;font-weight:400;color:#172b4d;">-</div>
<div class="t" style="right:1115.50px;top:774.34px;font-size:12px;line-height:15.0px;font-weight:400;color:#172b4d;">-</div>
<div class="t" style="right:984.50px;top:774.34px;font-size:12px;line-height:15.0px;font-weight:400;color:#172b4d;">-</div>
<div class="t" style="right:853.50px;top:774.34px;font-size:12px;line-height:15.0px;font-weight:400;color:#172b4d;">-</div>
<div class="t" style="right:722.50px;top:774.34px;font-size:12px;line-height:15.0px;font-weight:400;color:#172b4d;">-</div>
<div class="t" style="right:591.50px;top:774.34px;font-size:12px;line-height:15.0px;font-weight:400;color:#172b4d;">-</div>
<div class="t" style="right:460.50px;top:774.34px;font-size:12px;line-height:15.0px;font-weight:400;color:#172b4d;">-</div>
<div class="t" style="right:329.50px;top:774.34px;font-size:12px;line-height:15.0px;font-weight:400;color:#172b4d;">-</div>
<div class="t" style="right:198.50px;top:774.34px;font-size:12px;line-height:15.0px;font-weight:400;color:#172b4d;">-</div>
<div style="position:absolute;left:1791.47px;top:770px;width:43.53px;height:21px;background:#c4d6e7;border-radius:3px"></div>
<div class="t" style="right:67.05px;top:774.34px;font-size:12px;line-height:15.0px;font-weight:400;color:#253858;letter-spacing:-0.45px;">235.06</div>
<div class="t" style="left:30.70px;top:806.34px;font-size:12px;line-height:15.0px;font-weight:700;color:#3b73af;">MFSD-45</div>
<div class="t" style="left:150px;top:805.27px;font-size:12px;line-height:17.14px;color:#172b4d">Request from JSD<br>portal 1</div>
<div class="t" style="left:280.40px;top:806.34px;font-size:12px;line-height:15.0px;font-weight:400;color:#172b4d;">Waiting for support</div>
<div class="t" style="left:410.00px;top:806.34px;font-size:12px;line-height:15.0px;font-weight:400;color:#172b4d;">21/Feb/20 14:28</div>
<div class="t" style="right:1246.50px;top:806.34px;font-size:12px;line-height:15.0px;font-weight:400;color:#172b4d;">-</div>
<div class="t" style="right:1115.50px;top:806.34px;font-size:12px;line-height:15.0px;font-weight:400;color:#172b4d;">-</div>
<div class="t" style="right:984.50px;top:806.34px;font-size:12px;line-height:15.0px;font-weight:400;color:#172b4d;">-</div>
<div class="t" style="right:853.50px;top:806.34px;font-size:12px;line-height:15.0px;font-weight:400;color:#172b4d;">-</div>
<div class="t" style="right:722.50px;top:806.34px;font-size:12px;line-height:15.0px;font-weight:400;color:#172b4d;">-</div>
<div class="t" style="right:591.50px;top:806.34px;font-size:12px;line-height:15.0px;font-weight:400;color:#172b4d;">-</div>
<div class="t" style="right:460.50px;top:806.34px;font-size:12px;line-height:15.0px;font-weight:400;color:#172b4d;">-</div>
<div class="t" style="right:329.50px;top:806.34px;font-size:12px;line-height:15.0px;font-weight:400;color:#172b4d;">-</div>
<div class="t" style="right:198.50px;top:806.34px;font-size:12px;line-height:15.0px;font-weight:400;color:#172b4d;">-</div>
<div style="position:absolute;left:1715.00px;top:802px;width:120.00px;height:21px;background:#c4d6e7;border-radius:3px"></div>
<div class="t" style="right:67.05px;top:806.34px;font-size:12px;line-height:15.0px;font-weight:400;color:#253858;letter-spacing:-0.45px;">647.96</div>
</body></html>
